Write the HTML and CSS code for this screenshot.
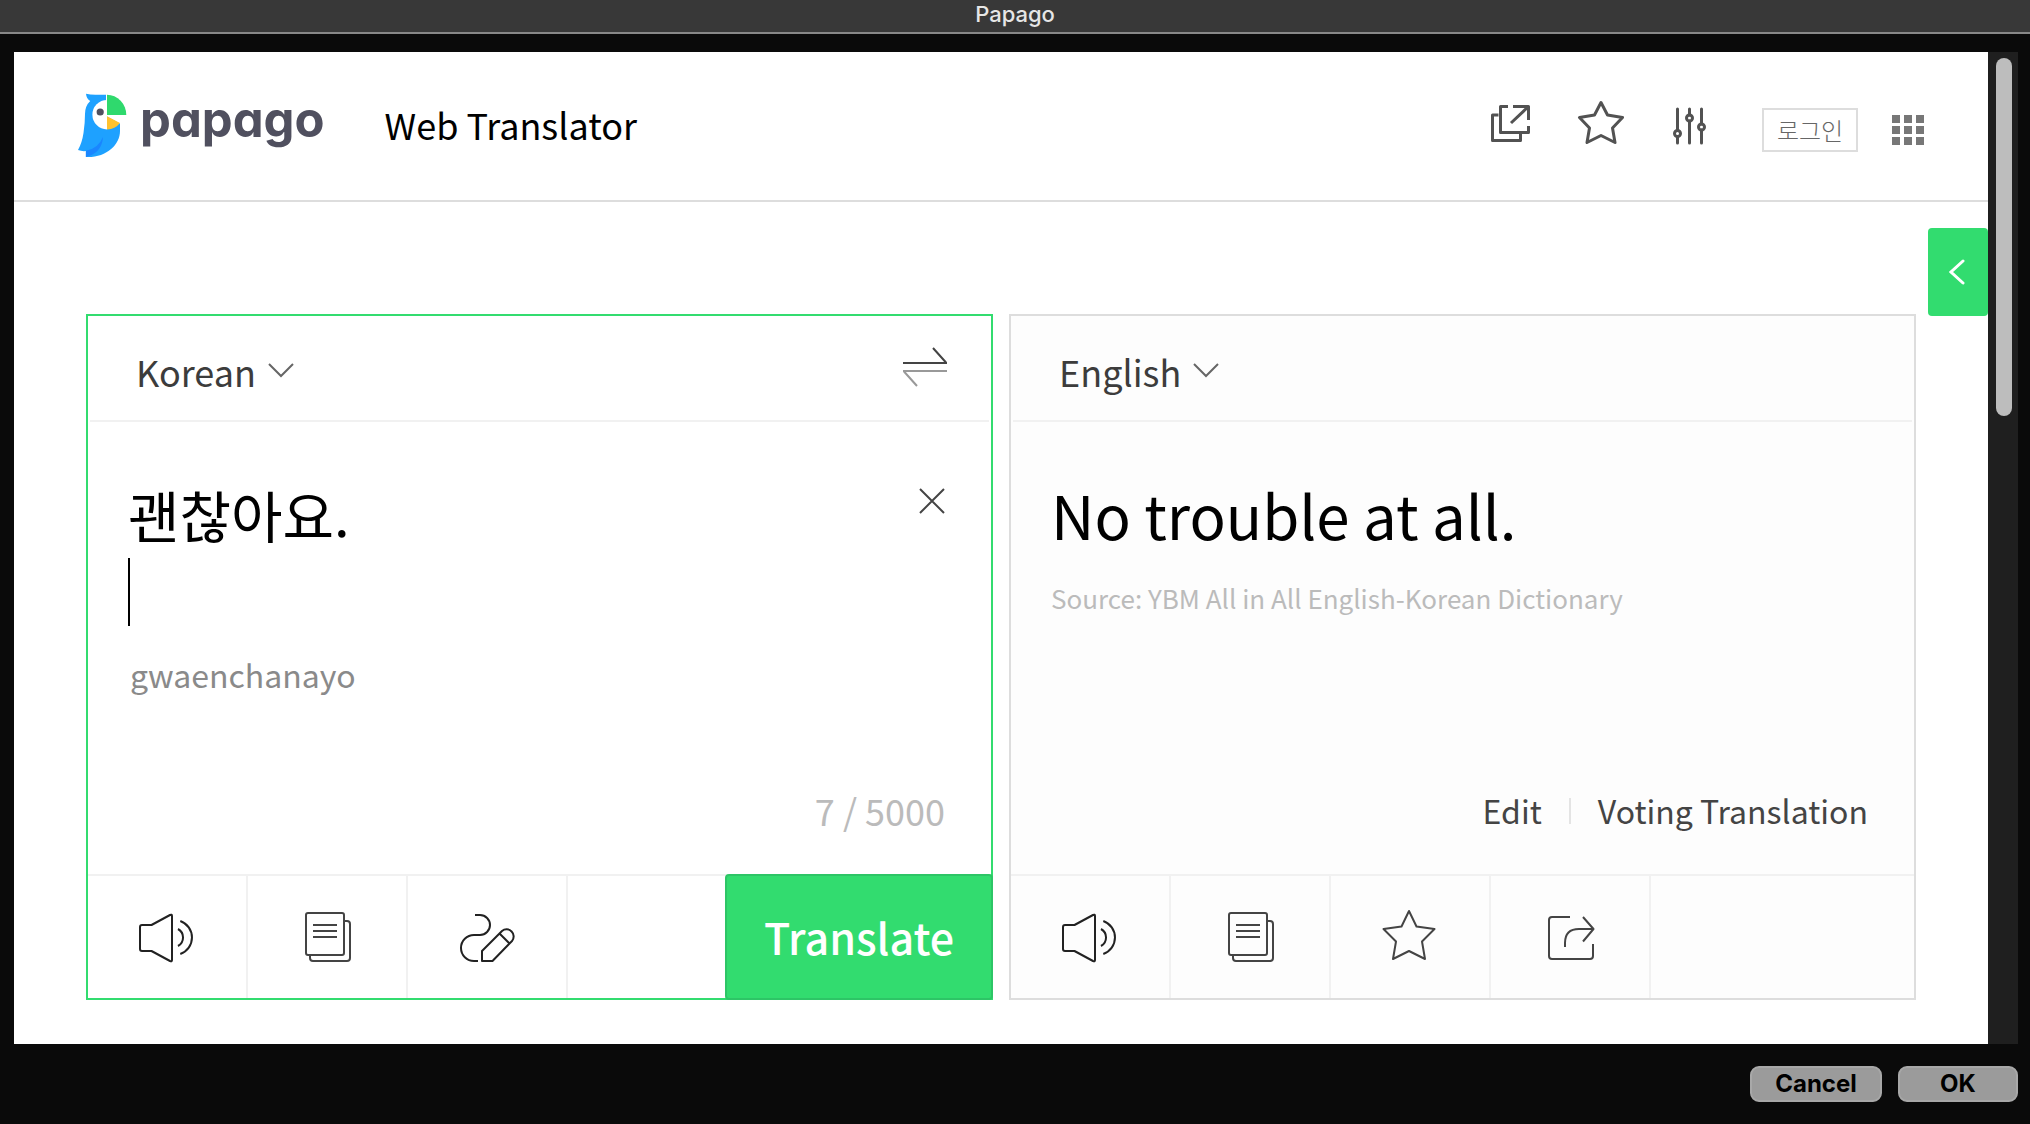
FILE: index.html
```html
<!DOCTYPE html>
<html lang="en">
<head>
<meta charset="utf-8">
<title>Papago</title>
<meta name="viewport" content="width=device-width, initial-scale=1">
<link rel="stylesheet" href="styles.css">
</head>
<body>
<div class="titlebar">Papago</div>

<div class="viewport">
  <div class="page">
    <header class="site-header">
      <a class="logo" href="#" aria-label="papago home">
        <svg class="logo-bird" viewBox="0 0 49 65" aria-hidden="true">
          <path fill="#1ea1ff" d="M8 .7Q13 2 20 1.7H28.2V22L42 30.500V38C42 52 28 65 7.900 64V58Q4 58.500 0 57Q4 50 5.500 40Q7 30 7 21Q7 13 12.200 8Q8.500 6 8 .7Z"/>
          <path fill="#1a86ff" d="M25 44Q20 56 7.900 57.700V64Q24 60 25 44Z"/>
          <path fill="#fff" d="M29 7A14.600 14.700 0 0 0 29 36.400Z"/>
          <path fill="#fff" d="M28 1H29V36H28ZM28 21H48V24L42 30.500L28 23Z"/>
          <path fill="#2fd96d" d="M29 1.700A19.500 20.300 0 0 1 48.300 22H29Z"/>
          <path fill="#ffc22e" d="M29 23.200L42 30Q37 36.500 29 36.400Z"/>
          <ellipse cx="22.200" cy="19" rx="3.600" ry="3.600" fill="#50505f"/>
        </svg>
        <span class="logo-word">papago</span>
      </a>
      <h1 class="site-title">Web Translator</h1>

      <nav class="tools" aria-label="Tools">
        <button class="icon-button" type="button" aria-label="Open in new window">
          <svg class="tool-icon" viewBox="0 0 48 48"><path d="M12.500 15H6.500V40.500H34.500V34M22 6.500H14.500V32.500H42.500V26M27 6.500H42.500V20M25 23L42 7"/></svg>
        </button>
        <button class="icon-button" type="button" aria-label="Favorites">
          <svg class="tool-icon" viewBox="0 0 48 48"><path d="M25 2.500L31.500 15L46.500 17.500L36.500 28L39 42.500L25 35.500L11 42.500L13.500 28L3.500 17.500L18.500 15Z"/></svg>
        </button>
        <button class="icon-button" type="button" aria-label="Settings">
          <svg class="tool-icon round" viewBox="0 0 48 48"><path d="M11.500 9V30M11.500 37V43M23.500 9V15M23.500 21V43M35.500 9V24M35.500 30V43"/><circle cx="11.500" cy="33.500" r="3"/><circle cx="23.500" cy="18" r="3"/><circle cx="35.500" cy="27" r="3"/></svg>
        </button>
      </nav>
      <div class="account">
        <a class="login" href="#" lang="ko">로그인</a>
        <button class="icon-button" type="button" aria-label="All services">
          <svg class="grid-icon" viewBox="0 0 32 30"><path d="M0 0h8v8H0zM12 0h8v8h-8zM24 0h8v8h-8zM0 11h8v8H0zM12 11h8v8h-8zM24 11h8v8h-8zM0 22h8v8H0zM12 22h8v8h-8zM24 22h8v8h-8z"/></svg>
        </button>
      </div>
    </header>

    <button class="side-tab" type="button" aria-label="Open side panel">
      <svg class="side-arrow" viewBox="0 0 16 26"><path d="M14 2L2 13L14 24"/></svg>
    </button>

    <main class="panels">
      <section class="card source">
        <div class="card-head">
          <label class="language">
            <select class="language-select" aria-label="Source language"><option>Korean</option></select>
            <svg class="chevron" viewBox="0 0 28 16"><path d="M2 1L14 13L26 1"/></svg>
          </label>
          <button class="icon-button" type="button" aria-label="Swap languages">
            <svg class="swap" viewBox="0 0 44 42"><path d="M0 16H44M30 1L43 15.500"/><path class="faint" d="M44 24H0M1 24.500L14 39"/></svg>
          </button>
        </div>
        <div class="card-body">
          <div class="editor">
            <div class="editor-field">
              <textarea class="input-text" lang="ko" rows="2" aria-label="Text to translate" spellcheck="false">괜찮아요.
</textarea>
              <span class="caret"></span>
            </div>
            <button class="icon-button clear" type="button" aria-label="Clear text">
              <svg class="cross" viewBox="0 0 26 26"><path d="M1 1L25 25M25 1L1 25"/></svg>
            </button>
          </div>
          <p class="romanized">gwaenchanayo</p>
          <p class="counter">7 / 5000</p>
        </div>
        <div class="card-foot">
          <button class="action" type="button" aria-label="Listen">
            <svg class="action-icon" viewBox="0 0 56 56"><path d="M3 16H12.500L31 6Q33 5 33 7V51Q33 53 31 52L12.500 42H3Q1 42 1 40V18Q1 16 3 16ZM39 20A9.700 9.700 0 0 1 39 37M41.300 12A17.500 17.500 0 0 1 41.300 45"/></svg>
          </button>
          <button class="action" type="button" aria-label="Dictionary">
            <svg class="action-icon mid" viewBox="0 0 56 56"><rect x="7" y="4" width="38" height="42" rx="2"/><path d="M14 16H38M14 22H38M14 28H38M46 12H48Q51 12 51 15V49Q51 52 48 52H14Q11 52 11 49V47"/></svg>
          </button>
          <button class="action" type="button" aria-label="Handwriting">
            <svg class="action-icon" viewBox="0 0 56 56"><path d="M16 6H21A10 10 0 0 1 21 26H15A13 13 0 0 0 15 52H19M23 52V42L43 22A7.100 7.100 0 0 1 53 32L33.500 52ZM40.500 24.500L50.500 34.500"/></svg>
          </button>
          <button class="translate" type="button">Translate</button>
        </div>
      </section>

      <section class="card target">
        <div class="card-head">
          <label class="language">
            <select class="language-select" aria-label="Target language"><option>English</option></select>
            <svg class="chevron" viewBox="0 0 28 16"><path d="M2 1L14 13L26 1"/></svg>
          </label>
        </div>
        <div class="card-body">
          <p class="result">No trouble at all.</p>
          <p class="credit">Source: YBM All in All English-Korean Dictionary</p>
          <div class="feedback">
            <a class="feedback-link" href="#">Edit</a>
            <a class="feedback-link" href="#">Voting Translation</a>
          </div>
        </div>
        <div class="card-foot">
          <button class="action" type="button" aria-label="Listen">
            <svg class="action-icon" viewBox="0 0 56 56"><path d="M3 16H12.500L31 6Q33 5 33 7V51Q33 53 31 52L12.500 42H3Q1 42 1 40V18Q1 16 3 16ZM39 20A9.700 9.700 0 0 1 39 37M41.300 12A17.500 17.500 0 0 1 41.300 45"/></svg>
          </button>
          <button class="action" type="button" aria-label="Copy">
            <svg class="action-icon mid" viewBox="0 0 56 56"><rect x="7" y="4" width="38" height="42" rx="2"/><path d="M14 16H38M14 22H38M14 28H38M46 12H48Q51 12 51 15V49Q51 52 48 52H14Q11 52 11 49V47"/></svg>
          </button>
          <button class="action" type="button" aria-label="Save to favorites">
            <svg class="action-icon mid" viewBox="0 0 56 56"><path d="M27 2L34.500 17.500L52.500 20L40 32.500L43 50L27 42L11 50L14 32.500L1.500 20L19.500 17.500Z"/></svg>
          </button>
          <button class="action" type="button" aria-label="Share">
            <svg class="action-icon mid" viewBox="0 0 56 56"><path d="M28 8H10Q7 8 7 11V47Q7 50 10 50H48Q51 50 51 47V35M23 38V34Q23 20 37 20H51M41 8L51.500 20L41 32.500"/></svg>
          </button>
        </div>
      </section>
    </main>
  </div>
  <div class="scrollbar"><div class="thumb"></div></div>
</div>

<footer class="dialog-actions">
  <button class="dialog-button" type="button">Cancel</button>
  <button class="dialog-button ok" type="button">OK</button>
</footer>
</body>
</html>
```

FILE: styles.css
```css
*,
*::before,
*::after {
  box-sizing: border-box;
}

body {
  margin: 0;
  min-height: 100vh;
  display: flex;
  flex-direction: column;
  background: #0a0a0a;
  color: #000;
  font-family: "Noto Sans CJK KR", "Noto Sans", sans-serif;
}

p,
h1 {
  margin: 0;
  font-weight: 400;
}

a {
  color: inherit;
  text-decoration: none;
}

button,
select,
textarea {
  margin: 0;
  padding: 0;
  border: 0;
  border-radius: 0;
  outline: 0;
  background: none;
  color: inherit;
  font: inherit;
}

svg {
  display: block;
  fill: none;
}

/* Window frame */

.titlebar {
  height: 34px;
  border-bottom: 2px solid #888;
  background: #383838;
  color: #e6e6e6;
  font: 500 22px/28px Inter, sans-serif;
  text-align: center;
}

.viewport {
  flex: 1;
  display: flex;
  margin: 18px 12px 0 14px;
}

.page {
  position: relative;
  flex: 1;
  display: flex;
  flex-direction: column;
  background: #fff;
}

.scrollbar {
  width: 30px;
  padding: 6px 6px 0 8px;
  background: #1f1f1f;
}

.thumb {
  height: 358px;
  border-radius: 8px;
  background: #bdbdbd;
}

.dialog-actions {
  display: flex;
  justify-content: flex-end;
  gap: 16px;
  padding: 22px 12px;
}

.dialog-button {
  width: 132px;
  height: 36px;
  border: 2px solid #a8a8a8;
  border-radius: 9px;
  background: #9b9b9b;
  font: 700 24px/30px Inter, sans-serif;
}

.dialog-button.ok {
  width: 120px;
}

/* Site header */

.site-header {
  display: flex;
  align-items: center;
  height: 150px;
  padding: 0 64px;
  border-bottom: 2px solid #ddd;
}

.logo {
  display: flex;
  align-items: center;
  gap: 13px;
  padding-bottom: 2px;
}

.logo-bird {
  width: 49px;
  height: 65px;
}

.logo-word {
  padding-bottom: 10px;
  color: #50505f;
  font: 700 49px/56px Inter, sans-serif;
  font-feature-settings: "cv11";
}

.site-title {
  margin-left: 60px;
  padding-bottom: 4px;
  font-size: 36px;
  line-height: 48px;
}

.tools {
  display: flex;
  gap: 42px;
  margin-left: auto;
  padding-bottom: 4px;
}

.tool-icon {
  width: 48px;
  height: 48px;
  stroke: #525252;
  stroke-width: 3;
  stroke-linejoin: round;
}

.tool-icon.round {
  stroke-linecap: round;
}

.account {
  display: flex;
  align-items: center;
  gap: 34px;
  margin-left: 48px;
  padding-top: 8px;
}

.login {
  width: 96px;
  border: 2px solid #ddd;
  color: #666;
  font-size: 24px;
  font-weight: 300;
  line-height: 40px;
  text-align: center;
}

.grid-icon {
  width: 32px;
  height: 30px;
  fill: #777;
}

.side-tab {
  position: absolute;
  top: 176px;
  right: 0;
  width: 60px;
  height: 88px;
  padding-left: 21px;
  border-radius: 4px;
  background: #32dc6f;
}

.side-arrow {
  width: 16px;
  height: 26px;
  stroke: #fff;
  stroke-width: 3;
  stroke-linecap: round;
}

/* Translation panels */

.panels {
  flex: 1;
  display: grid;
  grid-template-columns: 1fr 1fr;
  gap: 16px;
  padding: 112px 72px 44px;
}

.card {
  display: flex;
  flex-direction: column;
  border: 2px solid #ddd;
}

.source {
  border-color: #32dc6f;
}

.target {
  background: #fdfdfd;
}

.card-head {
  display: flex;
  align-items: center;
  justify-content: space-between;
  height: 106px;
  margin: 0 2px;
  padding: 0 42px 0 46px;
  border-bottom: 2px solid #f1f1f1;
}

.language {
  display: flex;
  align-items: center;
  gap: 11px;
  padding-top: 6px;
  color: #3c3c3c;
}

.language-select {
  appearance: none;
  field-sizing: content;
  font-size: 36px;
  line-height: 48px;
}

.chevron {
  width: 28px;
  height: 16px;
  stroke: #666;
  stroke-width: 2;
}

.swap {
  width: 44px;
  height: 42px;
  stroke: #444;
  stroke-width: 2;
}

.faint {
  stroke: #999;
}

.card-body {
  flex: 1;
  display: flex;
  flex-direction: column;
  padding: 52px 46px 36px 40px;
}

.editor {
  display: flex;
  align-items: flex-start;
}

.editor-field {
  position: relative;
  flex: 1;
}

.input-text {
  display: block;
  width: 100%;
  height: 160px;
  resize: none;
  overflow: hidden;
  font-size: 56px;
  line-height: 80px;
}

.caret {
  position: absolute;
  top: 84px;
  left: 0;
  width: 2px;
  height: 68px;
  background: #000;
}

.clear {
  padding: 14px 0;
}

.cross {
  width: 26px;
  height: 26px;
  stroke: #444;
  stroke-width: 2;
}

.romanized {
  margin-top: 16px;
  padding-left: 2px;
  color: #8a8a8a;
  font-size: 32px;
  line-height: 48px;
}

.counter {
  margin-top: auto;
  color: #bbb;
  font-size: 36px;
  line-height: 56px;
  text-align: right;
}

.result {
  font-size: 60px;
  line-height: 80px;
}

.credit {
  margin-top: 24px;
  color: #bbb;
  font-size: 26px;
  line-height: 40px;
}

.feedback {
  display: flex;
  justify-content: flex-end;
  align-items: center;
  margin-top: auto;
  color: #444;
  font-size: 32px;
  line-height: 56px;
}

.feedback-link + .feedback-link::before {
  content: "";
  display: inline-block;
  width: 2px;
  height: 26px;
  margin: 0 27px;
  background: #e4e4e4;
}

.card-foot {
  display: flex;
  height: 124px;
  border-top: 2px solid #f1f1f1;
}

.action {
  display: grid;
  place-items: center;
  width: 160px;
  border-right: 2px solid #f1f1f1;
}

.action-icon {
  width: 56px;
  height: 56px;
  stroke: #222;
  stroke-width: 2;
  stroke-linejoin: round;
}

.action-icon.mid {
  stroke: #444;
}

.translate {
  width: 268px;
  margin: -2px -2px -2px auto;
  padding-bottom: 2px;
  border: 2px solid #2dc566;
  border-radius: 4px;
  background: #32dc6f;
  color: #fff;
  font-size: 43px;
  font-weight: 500;
}
```
